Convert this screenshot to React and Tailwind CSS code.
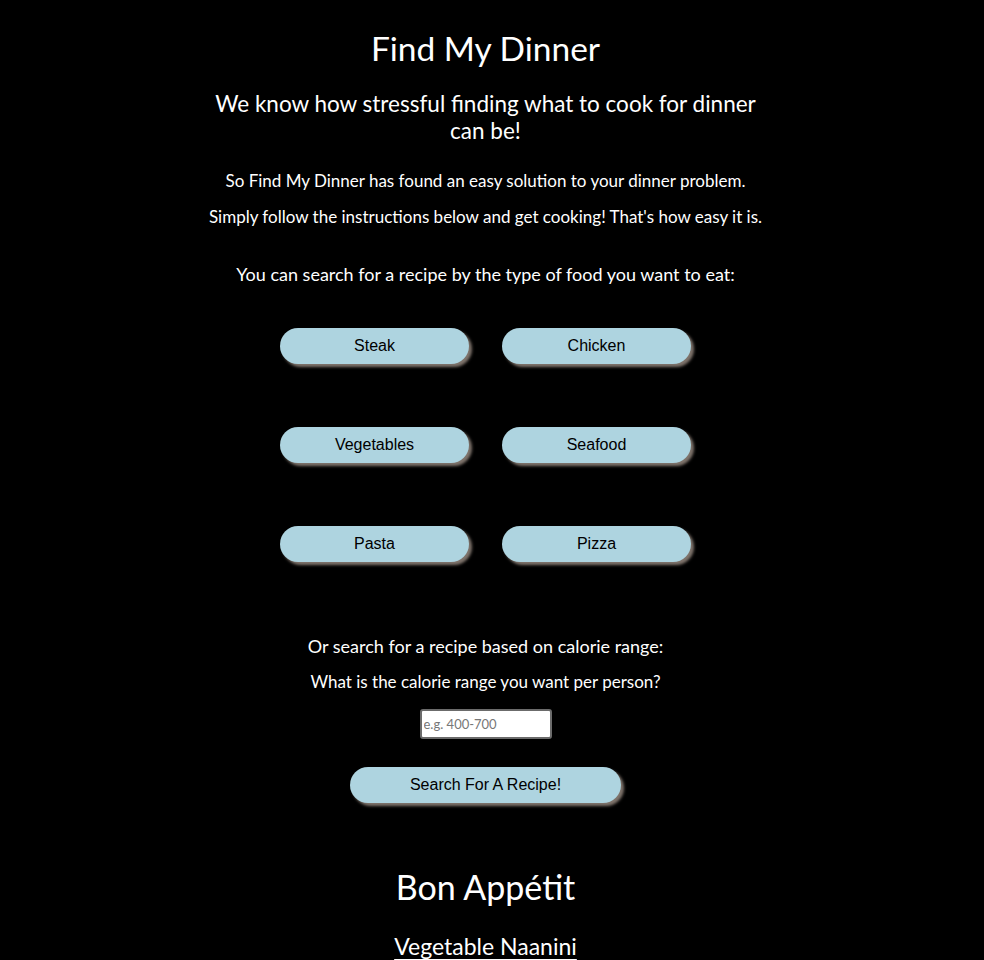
const foods = [
  ['Steak', 'Chicken'],
  ['Vegetables', 'Seafood'],
  ['Pasta', 'Pizza'],
]

const btn =
  "h-9 w-[189px] rounded-[20px] bg-[#aed4e0] text-black text-[16px] font-['Liberation_Sans',Arial,sans-serif] shadow-[3px_3px_3px_#7f746c]"

export default function App() {
  return (
    <div className="min-h-screen bg-black text-white font-['Lato',sans-serif]">
      <div className="w-[971px] flex flex-col items-center text-center">
        <h1 className="pt-[28px] text-[33.5px] leading-[40px]">Find My Dinner</h1>
        <h2 className="mt-[22px] w-[560px] text-[22.5px] leading-[27px]">
          We know how stressful finding what to cook for dinner can be!
        </h2>
        <p className="mt-[27px] text-[17px] leading-[20px]">
          So Find My Dinner has found an easy solution to your dinner problem.
        </p>
        <p className="mt-[16px] text-[17px] leading-[20px]">
          Simply follow the instructions below and get cooking! That's how easy it is.
        </p>
        <p className="mt-[36px] text-[18px] leading-[22px]">
          You can search for a recipe by the type of food you want to eat:
        </p>

        <div className="mt-[43px] flex flex-col gap-[63px]">
          {foods.map((row) => (
            <div key={row[0]} className="flex gap-[33px]">
              {row.map((f) => (
                <button key={f} className={btn}>
                  {f}
                </button>
              ))}
            </div>
          ))}
        </div>

        <p className="mt-[73px] text-[18px] leading-[22px]">
          Or search for a recipe based on calorie range:
        </p>
        <p className="mt-[15px] text-[17px] leading-[20px]">
          What is the calorie range you want per person?
        </p>
        <input
          type="text"
          placeholder="e.g. 400-700"
          className="mt-[17px] h-[30px] w-[132px] rounded-[3px] border-2 border-[#6b6b6b] bg-white px-[2px] text-[13px] text-black placeholder:text-[#777]"
        />
        <button className="mt-[28px] h-9 w-[271px] rounded-[20px] bg-[#aed4e0] text-black text-[16px] font-['Liberation_Sans',Arial,sans-serif] shadow-[3px_3px_3px_#7f746c]">
          Search For A Recipe!
        </button>

        <h2 className="mt-[64px] text-[34px] leading-[40px]">Bon Appétit</h2>
        <h3 className="mt-[26px] text-[23px] leading-[27px] underline underline-offset-4">
          Vegetable Naanini
        </h3>
      </div>
    </div>
  )
}
